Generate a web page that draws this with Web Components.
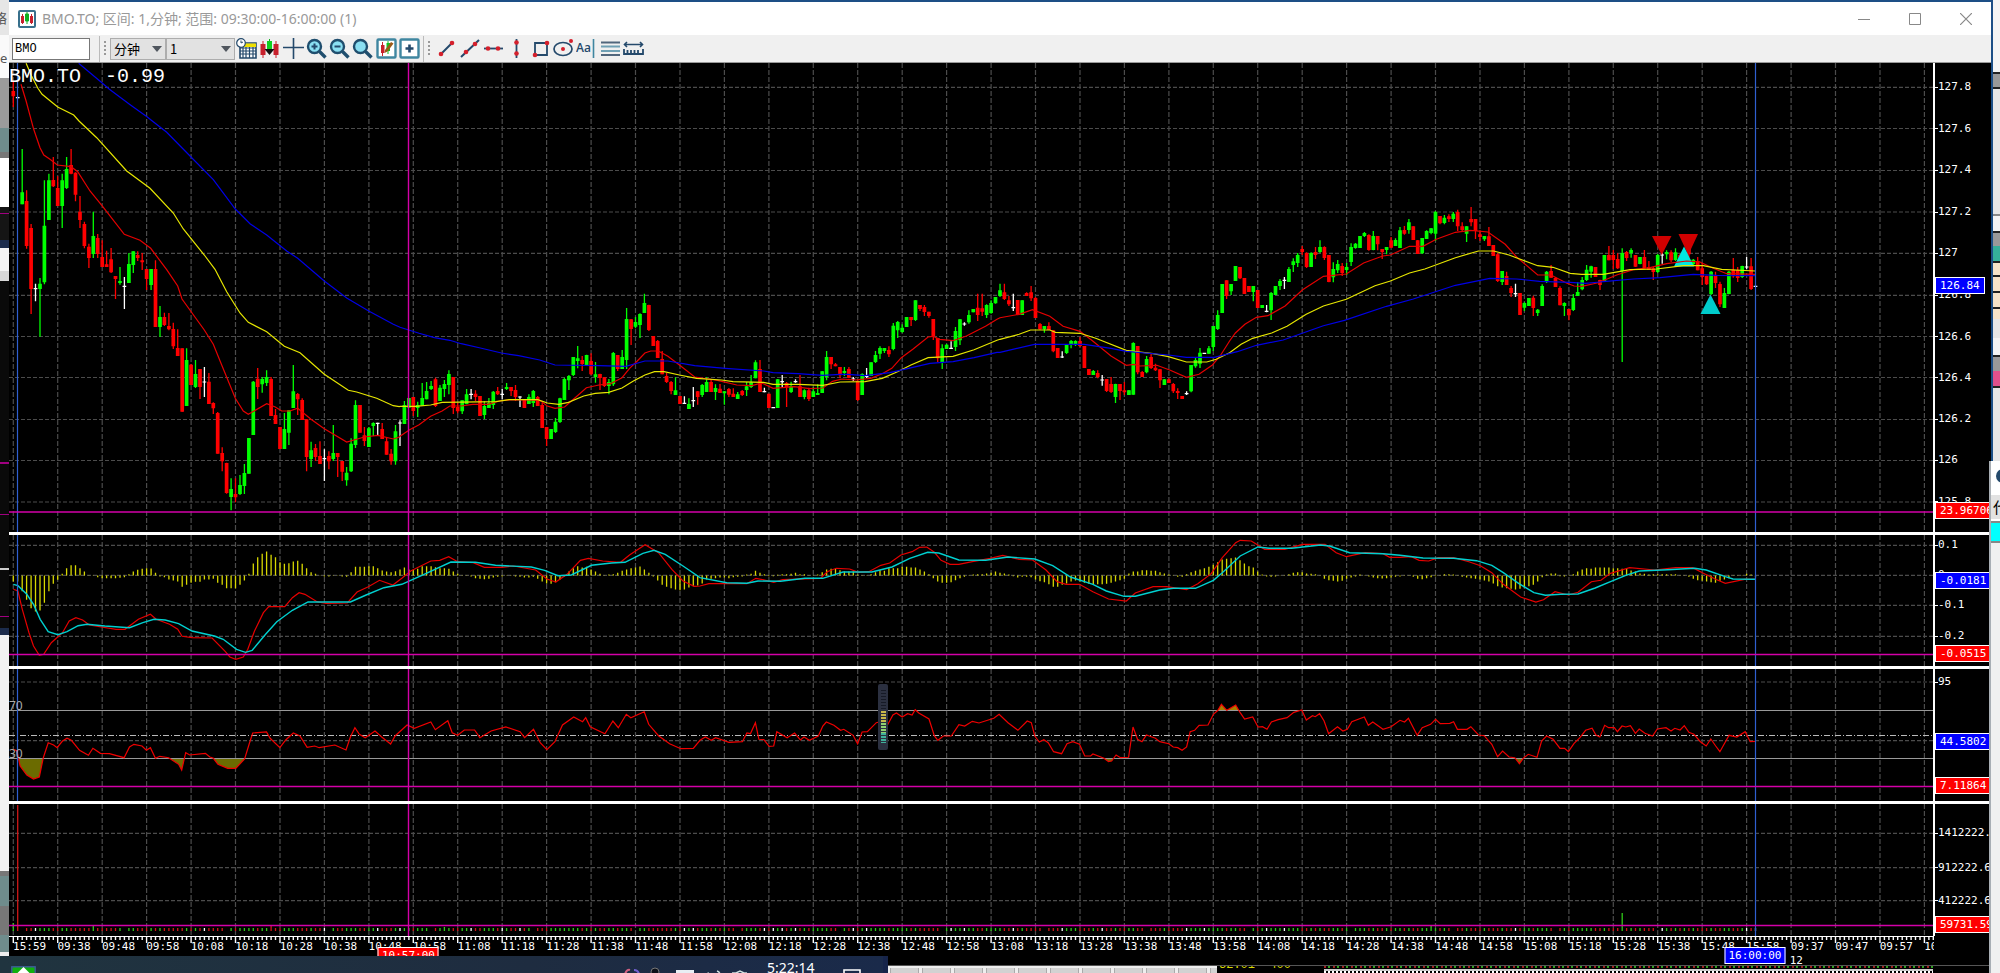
<!DOCTYPE html>
<html lang="zh-CN">
<head>
<meta charset="utf-8">
<title>BMO.TO</title>
<style>
html,body{margin:0;height:100%;overflow:hidden;background:#000}
</style>
</head>
<body>
<trading-desktop></trading-desktop>
<script>
const UI = '"Noto Sans","Noto Sans CJK SC",sans-serif';
const MONO = '"Liberation Mono","Noto Sans CJK SC",monospace';
const SCALE = '"DejaVu Sans Mono","Liberation Mono",monospace';

/* Candles: colour, then high, body top, body bottom, low, in thirds of a unit below `base`. */
const RUNS = [
 {i:0, base:0, d:'R240,270,286,318 W287,290,290,292'},
 {i:2, base:120, d:'G84,214,250,250 R208,240,375,383 R309,321,504,579 W488,503,503,541 G471,488,504,647 G178,314,484,490 G158,178,297,297 R108,177,196,198 R166,201,255,255 G158,178,255,321 G108,144,201,204 R84,132,158,160 R154,155,221,241 R225,272,297,321 R302,309,375,382 R368,377,411,441 G272,345,399,411 R339,351,399,411 R358,408,438,438 R389,430,438,438 R381,415,454,456 R465,465,474,534 G438,480,486,491 W468,496,496,564 G396,429,486,486 G391,391,432,456 R391,402,411,420 R396,418,424,447 R444,444,474,507 G444,444,492,507 R418,444,618,618 G555,588,618,648 R575,588,612,615 R576,615,625,628 R605,624,676,684 R625,681,705,705 R682,682,872,872 G682,717,855,855 R729,731,792,792 G717,759,798,801 R744,744,798,834 W738,783,783,828 R756,782,849,849 R844,846,862,879 R873,876,998,998 R979,996,1021,1051 R1025,1026,1116,1118 G1072,1104,1128,1168 R1072,1119,1129,1144 G1062,1092,1119,1122 G1029,1056,1095,1119 G951,951,1058,1058 G780,782,942,942 R741,773,798,834 G768,774,790,815 G748,768,786,795 R768,774,885,885 R864,882,909,909 R918,918,984,984 G876,924,984,984 G868,868,935,972 G732,811,861,861 R816,819,835,882 R832,837,897,897 R895,895,1008,1051 G962,988,1014,1038 R969,981,1008,1020 R961,1005,1029,1029 W985,1013,1013,1080 R991,1005,1021,1045 G912,996,1014,1020 R996,996,1008,1068 R1020,1020,1052,1080 G1038,1055,1078,1094 G952,968,1051,1053 G838,852,972,981 R852,852,935,935 R918,943,960,975 G918,922,978,978 G904,906,915,945 W905,907,907,943 R906,924,954,954 R951,961,1001,1001 R984,998,1021,1031 G912,931,1021,1031 W898,906,906,975 G840,852,909,909'},
 {i:89, base:280, d:'G351,351,380,380 R348,348,390,405 G362,372,381,408 G306,351,374,374 G303,330,355,355 G300,315,324,327 R290,295,375,378 G312,320,360,360 G297,309,324,348 G268,279,312,340 R288,288,381,399 R366,378,391,397 G358,358,391,399 G324,340,369,370 W324,340,340,355 R328,338,348,360 R345,345,405,405 G361,375,402,414 G351,366,381,381 G330,332,372,384 R318,330,340,342 W324,340,340,355 G306,318,324,327 R318,318,330,345 R312,327,348,360 W346,348,348,378 R354,354,381,381 G340,348,369,369 G327,330,366,378 R345,348,375,375 R366,372,441,441 R438,438,474,495 G444,444,474,474 G411,422,453,456 G350,352,423,426 G290,294,357,357 G282,285,298,327 G228,228,282,285 G195,232,240,262 R225,237,249,270 G221,222,252,252 R217,240,280,282 G243,280,288,305 R278,279,291,327 R289,289,315,318 G294,303,315,340 G213,216,310,315 R222,222,264,270 G207,228,264,264 G81,114,237,264 R114,115,144,192 G108,123,137,142 G97,99,132,171 G38,66,96,96 R71,72,147,150 R165,165,195,195 R177,180,231,231 R210,234,280,280 R276,285,303,306 R300,303,330,340 G289,328,342,342 R345,345,369,369 W346,367,367,369 G352,369,384,384 W318,359,359,378 R330,331,348,371 G309,312,342,348 G288,303,333,333 R295,303,333,333 G310,321,333,357 R309,323,336,336 G330,331,337,371 R321,324,341,348 R322,338,348,348 G333,340,354,354 R327,330,342,345 G303,316,327,345 G282,304,318,321 G238,244,292,292 R237,264,333,333 W320,332,332,334 R338,338,381,381 W380,380,380,381 G294,295,381,381 W282,302,302,318 R303,306,318,378 G302,315,333,336 W295,302,302,305 R282,316,348,348 G325,328,348,355 R320,328,354,360 G318,331,348,348 G310,336,342,342 G270,271,336,336 G210,228,288,298 R228,228,250,264 R246,250,256,256 R258,258,283,292 G258,270,276,285 R258,264,291,292 W288,294,294,300 R298,300,357,360 G277,279,342,342 W261,286,286,291 G244,244,285,285 G210,222,243,246 G196,201,218,234 G201,201,210,216 R196,207,220,228 G126,134,204,208 G120,123,148,171 G130,140,153,155 G108,108,138,138 R108,108,117,135 G58,58,117,120 R72,72,84,90 R72,78,93,105 R92,92,105,110 R114,114,165,177 R171,171,232,243 G190,202,243,264 G189,191,204,204 W181,202,202,204 G138,150,198,210 G114,115,178,192 W124,129,129,134 G88,102,124,128 G84,84,94,94 R38,80,102,120 R38,82,92,105 G70,72,102,111 G58,66,96,98 G48,48,67,68'},
 {i:222, base:180, d:'G308,328,345,348 R308,334,354,357 R345,358,370,375 W338,380,380,390 R357,357,402,402 G358,358,402,402 R334,336,345,345 R315,334,352,360 R348,351,411,411 R426,429,445,446 G435,435,445,455 R424,435,447,447 R447,448,511,514 R501,501,531,531 W511,528,528,531 G489,489,516,519 G477,480,490,502 G478,480,492,495 R468,480,495,498 R495,495,561,561 R564,564,582,582 G567,570,582,582 R568,576,588,592 W582,597,597,614 R594,594,630,633 R588,609,633,636 G608,609,648,666 R609,609,630,657 R603,628,634,642 G627,628,642,642 G484,486,641,641 R495,495,574,580 R570,573,588,588 G525,534,574,577 R516,528,561,564 R548,560,568,570 R564,565,598,621 G594,595,612,612 R592,595,606,606 R606,609,631,636 R622,630,636,654 R645,645,654,654 W631,638,638,642 G552,552,631,634 G530,537,556,560 G501,515,548,561 W516,517,517,518 G495,502,518,519 G435,435,498,510 G388,402,444,447 G309,309,396,396 R298,298,345,354 G309,309,331,342 G255,255,300,300 R258,258,292,294 R291,291,339,339 R315,315,333,333 G315,315,333,361 R327,327,381,381 G372,372,381,381 W372,391,391,394 G333,336,388,417 G315,315,342,342 G294,300,315,327 W288,298,298,324 G258,264,303,303 G232,241,252,273 G216,222,246,258 R195,204,213,222 R214,216,258,261 G214,216,258,258 R198,213,222,234 G178,198,213,216 R196,198,231,237 R222,222,303,304 G244,264,289,304 G237,249,268,276 R246,255,276,285 G246,258,267,282 G187,198,243,255 G186,188,201,203 G165,165,201,201 G153,156,165,168 R160,162,207,209 G150,165,207,208 R165,165,190,208 R204,204,213,234 G198,198,207,220 R168,178,200,201 G172,177,195,195 G138,148,201,201 R135,147,158,161 G114,124,147,158 R136,136,177,177 R177,178,219,219 G171,171,217,219 G148,150,174,174 G141,142,156,160 G90,93,158,180 R105,105,127,130 G102,110,126,130 R100,106,114,123 G93,98,114,123 R86,93,136,150 R124,136,147,152 G136,136,158,183 R78,114,124,136 R114,114,150,174 R148,160,168,180 G165,165,175,180 R138,166,195,195 R192,192,225,225 R217,220,300,303 G270,270,303,312 R272,285,312,312 R315,321,336,348 W308,338,338,348 R336,336,402,402 G364,366,380,390 G351,351,375,375 R344,350,381,405 G384,386,396,405 G310,315,375,375 G270,272,303,306 R252,270,290,290 R288,291,318,318 R316,321,373,373 G364,366,375,405 R384,384,403,418 G339,351,387,390 G303,333,345,345 G288,297,325,328 G252,266,297,300 G254,256,272,290 R258,258,288,288 R296,297,312,327 G222,222,303,303 R195,222,238,238 R207,222,237,264 R217,234,262,264 G202,216,270,543 R210,213,231,240 G202,207,216,230 R222,222,257,258 G228,228,249,250 R207,228,261,262 R240,258,267,267 R257,262,273,297 G219,222,273,276 W213,222,222,248 G208,213,220,235 R208,214,238,243 G202,214,237,240 R218,222,245,250 G218,222,250,250 R180,190,220,230 G234,236,250,255 R228,240,268,268 R246,262,288,312 R284,285,310,312 G270,272,339,342 R272,284,306,321 R302,309,370,378 G321,336,381,381 G270,272,339,340 R231,266,286,290 R258,267,291,303 G254,255,288,291 W228,258,258,264 R231,256,324,327 W315,316,316,317'}
];
const STEP = 400 / 90, FIRST = 13.3;
const xAt = i => FIRST + STEP * i;
const candles = [];
for (const r of RUNS) r.d.split(' ').forEach((t, n) => {
  const [h, o, c, l] = t.slice(1).split(',').map(v => r.base + v / 3);
  candles.push({ i: r.i + n, k: t[0], h, o, c, l });
});

/* Polyline chunks: x origin, x divisor, y base, then x,y pairs. */
const line = chunks => chunks.map(([x0, sx, y0, s]) => s.trim().split(/\s+/).map(p => {
  const [x, y] = p.split(',').map(Number);
  return (x0 + x / sx).toFixed(1) + ',' + (y0 + y / 3).toFixed(1);
}).join(' ')).join(' ');
const A = 2.376, B = 2.613, C = 2.24;

const maFast = line([[0,A,0,'50,250 62,300 80,385 95,440 104,462'],
 [0,3,120,'150,115 172,132 213,137 233,152 270,210 306,254 373,340 420,358 452,382 500,446 533,495 546,534 613,627 640,670 665,732 706,832 730,870 745,880 800,848 826,858 845,870 870,870 893,862 933,895 973,923 1040,963 1093,948 1133,943 1180,954 1198,948'],
 [400,B,280,'0,466 25,446 50,431 80,406 110,390 130,375 160,375 190,370 230,370 260,360 290,356 330,357 365,358 385,375 405,382 430,378 460,348 487,320 520,312 550,308 580,290 600,262 620,240 640,216 655,210 675,210 700,226 730,252 770,288 830,298 880,312 920,314 945,306 975,322 1030,317 1070,323 1105,321 1130,301 1155,294 1190,297 1230,292 1260,278 1285,262 1310,230 1340,205 1380,168 1393,166 1410,175 1445,179 1480,165 1530,136 1560,115'],
 [1000,B,180,'0,410 50,400 85,386 130,406 165,436 209,451 240,478 290,525 330,553 350,550 365,555 410,553 445,568 487,589 520,580 555,552 575,525 600,480 615,456 640,430 670,409 700,404 745,375 790,327 845,286 905,279 950,246 1000,225 1020,222 1070,196 1105,196 1140,175 1190,154 1230,148 1275,153 1320,190 1350,228 1405,282 1440,282 1480,306 1500,315 1520,316 1560,306'],
 [1500,3,180,'300,303 350,282 400,266 450,260 500,248 560,240 600,243 640,262 680,278 766,280']]);
const maMid = line([[0,A,0,'62,187 75,225 90,262 100,280 137,318 175,342'],
 [0,3,120,'237,0 290,50 380,150 450,202 520,276 550,324 613,402 645,445 680,512 720,576 745,604 800,632 853,676 900,695 973,760 1045,808 1070,813 1130,832 1180,854 1198,857'],
 [400,B,280,'0,376 40,376 80,372 110,364 250,362 285,356 360,356 385,366 415,370 440,364 480,345 510,337 545,334 580,321 610,300 640,282 665,272 690,272 730,282 775,292 840,297 870,302 950,304 975,310 1040,310 1105,313 1150,303 1215,302 1260,292 1300,272 1335,252 1380,230 1445,226 1500,206 1560,178'],
 [1000,B,180,'0,475 50,460 80,447 130,447 145,454 209,457 250,472 330,508 400,518 440,527 487,543 540,543 565,535 600,515 630,490 660,472 710,456 750,436 800,400 845,375 905,355 980,314 1020,300 1070,276 1110,264 1190,230 1250,210 1290,210 1330,222 1405,254 1445,259 1490,277 1520,280 1568,280'],
 [1500,3,180,'310,280 390,266 470,264 550,254 610,254 665,265 766,270']]);
const maSlow = line([[0,A,0,'187,187 240,243 260,265 310,312 350,348'],
 [0,3,120,'457,0 500,34 573,108 640,176 706,264 750,308 800,342 860,390 893,412 973,480 1040,531 1106,570 1180,610'],
 [400,B,280,'0,139 50,157 90,170 130,178 160,188 210,201 265,216 310,224 365,237 405,252 520,254 590,256 640,240 700,240 770,254 850,262 950,270 975,275 1040,278 1105,283 1150,280 1170,280 1215,284 1280,275 1340,259 1385,247 1445,242 1500,230 1560,214'],
 [1000,B,180,'0,514 90,490 220,490 290,502 330,511 440,522 487,529 560,529 620,512 670,493 740,477 845,434 900,418 1010,376 1080,354 1190,313 1280,292 1350,294 1410,301 1490,304 1530,307 1568,303'],
 [1500,3,180,'310,302 400,294 480,290 580,280 650,283 766,284']]);

const macd = line([[0,C,520,'30,205 40,210 50,265 65,335 75,375 88,403 98,400 115,365 140,335 155,300 170,290 185,297 200,312 260,325 280,325 310,295 337,280 350,295 380,310 398,325 408,346 430,350 475,351 505,392 515,408 528,415 545,408 555,385 570,330 590,275 602,257 638,257 655,230 670,215 683,220 710,242 730,247 778,246 800,213 825,197 850,178 880,192 900,172 920,150 965,120 985,118 1005,107 1025,122 1060,125 1085,139 1125,139 1150,135 1200,147 1225,174 1245,183 1270,160 1300,118 1318,112 1350,120 1390,124 1410,102 1445,71 1475,95 1505,145 1530,180 1555,196'],
 [700,C,520,'0,195 20,188 105,188 125,172 145,177 165,184 185,176 270,172 285,152 305,142 335,144 355,154 378,152 405,133 425,126 450,102 475,92 492,79 508,78 525,94 540,118 560,130 580,130 610,122 650,112 678,103 715,115 745,117 775,147 800,182 820,190 850,190 880,212 915,234 955,240 975,216 1015,197 1045,197 1090,206 1115,188 1145,158 1170,110 1200,65 1210,58 1235,60 1265,85 1310,85 1350,70 1400,70 1425,95 1448,107 1490,95 1530,98 1545,109'],
 [1400,B,520,'0,109 30,107 50,118 75,120 100,110 140,110 180,122 210,134 240,155 270,190 315,228 355,243 375,236 405,212 440,222 465,214 500,182 525,178 550,157 600,140 665,147 720,140 765,140 790,155 825,175 850,187 900,175 929,175']]);
const signal = line([[0,C,520,'30,190 40,194 60,220 75,250 90,295 108,332 130,341 150,332 175,314 195,310 235,315 290,320 320,305 345,295 370,297 400,308 430,330 480,345 500,355 530,385 550,394 565,388 595,340 620,302 655,268 690,243 785,243 820,222 860,200 900,190 950,160 1010,123 1065,124 1110,133 1190,138 1220,148 1250,164 1280,162 1325,133 1370,126 1400,124 1440,97 1465,88 1490,100 1530,135'],
 [700,C,520,'0,170 60,185 105,187 130,180 180,181 235,172 275,172 320,153 385,153 430,138 470,112 510,94 535,96 580,117 640,118 690,108 750,114 790,134 830,168 880,190 910,210 950,226 975,226 1030,207 1060,202 1110,202 1150,178 1170,155 1210,105 1250,78 1275,82 1325,82 1390,72 1410,75 1455,95 1530,98'],
 [1400,B,520,'0,103 60,111 140,112 200,119 240,133 270,155 310,187 350,215 380,223 420,220 465,219 510,201 550,182 590,163 625,150 700,146 770,142 800,147 850,167 870,174 929,175']]);
const HIST = '-18 -18 -47 -73 -98 -108 -105 -82 -47 -25 -13 5 22 31 31 22 12 1 1 -5 -8 -8 -8 -8 -7 -5 4 12 17 20 22 21 8 -3 -5 -12 -15 -18 -34 -28 -22 -19 -19 -12 -12 -10 -22 -28 -38 -38 -38 -28 -15 5 36 55 65 72 62 55 40 35 37 42 44 35 22 10 5 1 -3 -3 1 1 -3 -4 10 26 26 26 28 28 22 15 12 10 13 18 24 18 18 20 28 28 28 25 22 22 20 12 5 1 1 -3 -8 -10 -11 -10 -6 -4 -3 1 1 -3 -4 -6 -6 -4 -10 -18 -24 -25 -20 -12 -3 12 22 28 24 26 18 12 5 1 3 4 8 14 18 22 24 27 18 8 -3 -15 -28 -34 -38 -42 -44 -42 -36 -32 -30 -24 -12 -10 -8 -6 -6 -8 -5 -4 -3 3 5 14 8 4 -2 -2 2 4 4 5 8 4 4 1 -1 3 10 18 20 20 16 12 12 12 3 1 1 4 10 16 14 22 22 22 26 26 24 24 18 12 4 -8 -18 -22 -22 -20 -14 -8 -4 -1 3 4 4 6 8 12 8 6 3 -2 -6 -4 -4 -5 -12 -17 -20 -26 -34 -34 -28 -24 -18 -15 -18 -22 -25 -26 -26 -26 -25 -22 -18 -14 -10 6 12 12 16 16 14 14 10 6 3 1 -4 -4 4 10 14 18 22 26 32 40 48 50 52 54 46 36 28 24 12 3 -3 -4 -3 1 1 4 8 10 10 6 5 4 1 -10 -14 -16 -18 -16 -10 -6 -3 3 1 -3 -6 -8 -9 -8 -6 -4 -3 1 -1 -4 -10 -11 -8 -5 -2 1 4 4 3 -1 -4 -6 -8 -10 -12 -15 -18 -24 -32 -36 -38 -40 -42 -40 -36 -32 -28 -18 -5 3 6 6 -2 -3 -1 4 12 18 22 20 24 24 24 24 22 22 20 20 15 12 6 5 3 4 4 4 4 4 4 1 1 -4 -10 -14 -16 -18 -20 -22 -16 -12 -8 1 1 1 5 3 -5'.split(' ').map(Number);

const rsi = line([[0,C,520,'30,685 38,690 45,735 60,762 75,774 88,768 97,710 108,665 120,672 128,680 140,660 150,652 160,658 178,688 198,703 208,682 225,697 245,698 278,710 290,678 300,670 318,675 328,688 337,680 348,712 358,706 378,710 400,730 407,747 416,695 425,702 460,697 470,708 478,712 488,730 510,742 528,742 548,714 558,670 566,636 597,633 605,652 627,680 640,657 657,636 672,645 688,679 705,675 715,680 750,672 775,687 785,648 795,620 805,640 818,650 840,630 855,648 875,669 885,645 912,612 928,622 965,603 975,626 1003,599 1013,635 1025,643 1040,627 1063,627 1075,650 1100,630 1133,618 1165,632 1175,650 1195,625 1210,665 1225,686 1243,662 1260,612 1285,588 1305,602 1312,590 1322,617 1355,638 1373,600 1385,620 1403,580 1413,590 1443,572 1453,610 1475,644 1500,668 1525,683 1553,682'],
 [700,C,520,'0,658 12,648 25,658 35,650 65,664 95,662 105,636 113,638 124,605 132,655 143,656 155,676 165,675 172,632 195,650 212,636 225,657 233,648 245,658 265,645 275,615 283,603 300,613 315,628 322,625 343,643 353,668 363,633 375,632 395,605 405,602 420,612 432,582 440,576 453,588 465,578 475,582 482,566 490,576 513,594 525,645 533,658 545,645 563,645 580,611 593,615 610,601 625,606 658,592 670,580 690,605 712,628 733,600 742,605 750,645 760,663 770,656 780,665 792,692 810,698 822,668 835,662 850,670 862,705 875,705 880,699 905,712 915,722 922,720 932,702 942,710 960,709 970,618 980,655 990,662 1000,642 1020,652 1030,662 1050,668 1060,678 1070,680 1080,688 1090,678 1098,632 1108,628 1118,613 1138,612 1150,580 1160,568 1168,550 1180,568 1200,552 1210,575 1220,594 1238,588 1250,618 1260,617 1270,625 1280,603 1295,596 1315,590 1330,574 1348,567 1358,597 1372,584 1378,587 1388,578 1398,600 1408,638 1428,617 1440,630 1450,625 1460,602 1488,588 1497,613 1507,603 1530,625 1548,617'],
 [1400,B,520,'0,598 12,603 22,592 45,643 58,620 80,610 93,595 105,608 130,607 140,602 150,625 175,625 185,617 205,642 220,644 240,670 255,707 268,690 285,708 300,710 312,728 322,712 335,700 358,709 370,660 383,645 400,655 418,682 430,682 440,692 455,667 470,650 485,628 502,622 512,642 522,648 535,613 545,620 560,620 568,632 580,615 590,618 602,614 615,637 625,624 640,637 660,645 672,624 695,620 708,630 718,622 732,627 743,614 755,634 768,640 785,662 800,675 812,654 825,675 836,692 860,643 880,648 902,632 915,662 929,661']]);

const COL = { R: '#ff0000', G: '#00ff00', W: '#ffffff' };
const pl = (p, c, w = 1.2) => `<polyline points="${p}" fill="none" stroke="${c}" stroke-width="${w}"/>`;
const plots = {
  price() {
    let s = '';
    for (const k of 'RGW') {
      let wick = '', body = '';
      for (const c of candles) if (c.k === k) {
        const x = xAt(c.i).toFixed(1);
        wick += `M${x} ${c.h.toFixed(1)}V${c.l.toFixed(1)}`;
        const o = k === 'W' ? c.o - .6 : c.o, e = k === 'W' ? c.o + .6 : c.c;
        body += `M${x} ${o.toFixed(1)}V${e.toFixed(1)}`;
      }
      s += `<path d="${wick}" stroke="${COL[k]}" stroke-width="1.3"/><path d="${body}" stroke="${COL[k]}" stroke-width="3.7"/>`;
    }
    s += `<path d="M1652 235h19.500l-9.750 19zM1678.500 233h19.500l-9.750 21z" fill="#d00000"/>`;
    s += `<path d="M1674 265.500h20l-10-20z" fill="#00e8e0"/><path d="M1700.500 313h20l-10-19.500z" fill="#00cccc"/>`;
    return s + pl(maFast, '#e60000') + pl(maMid, '#e6e600') + pl(maSlow, '#0000e6');
  },
  macd() {
    let d = '';
    HIST.forEach((v, i) => d += `M${xAt(i).toFixed(1)} 574.500v${(-v / 3 || -.5).toFixed(1)}`);
    return `<path d="${d}" stroke="#d8d800" stroke-width="1.3"/>` + pl(macd, '#e60000') + pl(signal, '#00d0d0', 1.4);
  },
  rsi() {
    return `<clipPath id="lo"><rect x="9" y="758" width="1925" height="40"/></clipPath><clipPath id="hi"><rect x="9" y="670" width="1925" height="40"/></clipPath>
    <polygon points="13,600 ${rsi} 1755,600" fill="#6b6b00" clip-path="url(#lo)"/>
    <polygon points="13,900 ${rsi} 1755,900" fill="#a88000" clip-path="url(#hi)"/>
    <path d="M9 709.500H1934M9 757.500H1934" stroke="#999"/>
    <path d="M9 734.500H1934" stroke="#bbb" stroke-dasharray="6 2 1 2"/>` + pl(rsi, '#f00000') +
    `<rect x="878" y="683" width="10" height="66" rx="2" fill="#2b3040"/><path d="M883.500 689V709" stroke="#161a26" stroke-width="5" stroke-dasharray="1 2"/><path d="M883.500 710V721" stroke="#c8b84a" stroke-width="5" stroke-dasharray="2 1"/><path d="M883.500 722V732" stroke="#8fd070" stroke-width="5" stroke-dasharray="2 1"/><path d="M883.500 732V742" stroke="#3fb09a" stroke-width="5" stroke-dasharray="2 1"/>`;
  },
  volume() {
    let s = '';
    const tall = { 0: 922, 1: 804, 362: 912, 18: 925, 58: 925, 97: 926, 319: 925 };
    const dim = { R: '#d01818', G: '#30c818', W: '#ffffff' };
    for (const k of 'RGW') {
      let d = '';
      for (const c of candles) {
        const kk = c.i === 0 ? 'G' : c.i === 1 ? 'R' : c.k;
        if (kk !== k || (c.i * 37 % 23) === 5) continue;
        d += `M${xAt(c.i).toFixed(1)} 930V${tall[c.i] || 927}`;
      }
      s += `<path d="${d}" stroke="${dim[k]}" stroke-width="1.3"/>`;
    }
    return s;
  }
};

const make = (name, html, init) => customElements.define(name, class extends HTMLElement {
  constructor() { super(); this.attachShadow({ mode: 'open' }); }
  connectedCallback() {
    this.shadowRoot.innerHTML = typeof html === 'function' ? html(this) : html;
    if (init) init(this);
  }
});

make('price-tag', `<style>
:host{position:absolute;z-index:2;box-sizing:border-box;height:17px;border:1px solid #fff;background:#f00;color:#fff;font:11px/15px ${SCALE};padding:0 4px;white-space:nowrap}
:host([tone=blue]){background:#00f}
</style><slot></slot>`);

make('chart-pane', el => {
  const y0 = +el.getAttribute('from'), h = +el.getAttribute('span'), cross = el.getAttribute('cross');
  const levels = el.getAttribute('levels').split(' ').map(t => t.split(':'));
  let g = '';
  for (const [y] of levels) g += `M9 ${y}H1934`;
  let v = '';
  for (let k = 0; k <= 43; k++) v += `M${xAt(k * 10).toFixed(1)} ${y0}v${h}`;
  return `<style>
:host{display:grid;grid-template-columns:1fr 57px;min-height:0;border-bottom:3px solid #fff;background:#000;color:#fff;font:11px/14px ${SCALE}}
:host([last]){border-bottom:0}
.plot{position:relative;min-height:0;min-width:0}
svg{display:block;width:100%;height:100%;position:absolute;inset:0}
.axis{position:relative;border-left:2px solid #fff;margin-left:-1px;overflow:hidden}
.lv{position:absolute;left:0;transform:translateY(-50%);display:flex;align-items:center;white-space:nowrap}
.lv::before{content:"";width:3px;height:1px;background:#fff}
::slotted(price-tag){left:0;top:var(--at)}
</style>
<div class="plot"><svg viewBox="9 ${y0} 1925 ${h}" preserveAspectRatio="none" fill="none" aria-hidden="true">
<path d="${g}" stroke="#4c4c4c" stroke-width="1.2" stroke-dasharray="4 2"/><path d="${v}" stroke="#4c4c4c" stroke-width="1.2" stroke-dasharray="5 2"/>
${plots[el.getAttribute('kind')]()}
<path d="M1755.500 ${y0}v${h}${el.hasAttribute('last') ? '' : `M17.500 ${y0}v${h}`}" stroke="#2f5fd0" stroke-width="1.2"/>
<path d="M9 ${cross}H1934M408.500 ${y0}v${h}" stroke="#d400a8" stroke-width="1.4"/>
</svg><slot></slot></div>
<div class="axis">${levels.filter(l => l[1]).map(([y, t]) => `<span class="lv" style="top:${((y - y0) / h * 100).toFixed(2)}%">${t}</span>`).join('')}<slot name="tag"></slot></div>`;
});

make('time-axis', () => {
  const t = ['15:59'];
  for (let m = 9 * 60 + 38; m <= 15 * 60 + 58; m += 10) t.push(m);
  for (let m = 9 * 60 + 37; m <= 10 * 60 + 7; m += 10) t.push(m);
  const f = m => typeof m === 'string' ? m : String(m / 60 | 0).padStart(2, '0') + ':' + String(m % 60).padStart(2, '0');
  let minor = '', major = '';
  for (let i = 0; i < 433; i++) (i % 10 ? minor += `M${xAt(i).toFixed(1)} 0v3` : major += `M${xAt(i).toFixed(1)} 0v6`);
  return `<style>
:host{display:grid;grid-template-columns:1fr 57px;height:29px;background:#000;color:#fff;font:11px/14px ${SCALE}}
.scale{position:relative;overflow:hidden;border-top:1px solid #fff}
svg{display:block;width:100%;height:6px}
span{position:absolute;top:3px;white-space:nowrap}
.date{top:17px}
::slotted(price-tag){left:var(--at);top:10px;transform:translateX(-50%);padding:0 3px}
</style><div class="scale"><svg viewBox="9 0 1925 6" preserveAspectRatio="none" fill="none"><path d="${minor}${major}" stroke="#fff" stroke-width="1.4"/></svg>
${t.map((m, k) => `<span style="left:${((k * 44.444 + 4) / 1925 * 100).toFixed(2)}%">${f(m)}</span>`).join('')}
<span class="date" style="left:0.2%">10 Dec 2021</span><span class="date" style="left:92.500%">12</span><slot></slot></div><i></i>`;
});

make('title-bar', `<style>
:host{display:flex;align-items:center;height:33px;background:#fff;color:#999;font:14px/20px ${UI}}
.ico{width:18px;height:18px;margin:0 6px 0 9px}
h1{font:inherit;margin:0;flex:1;white-space:nowrap}
button{width:51px;height:32px;border:0;background:none;padding:0;display:grid;place-items:center}
</style>
<svg class="ico" viewBox="0 0 18 18"><rect x="1" y="1" width="16" height="16" rx="1" fill="#fff" stroke="#38708c" stroke-width="2"/><path d="M4.500 4v10M13.500 4v10" stroke="#c8202c" stroke-width="1"/><path d="M3 6h3v7H3zM12 6h3v7h-3z" fill="#c8202c"/><path d="M9 2v12M7.500 4h3v7h-3z" fill="#10b020" stroke="#10b020"/></svg>
<h1>BMO.TO; 区间: 1,分钟; 范围: 09:30:00-16:00:00 (1)</h1>
<button aria-label="最小化"><svg width="12" height="12"><path d="M0 6.500h12" stroke="#888"/></svg></button>
<button aria-label="最大化"><svg width="12" height="12"><path d="M.5.5h11v11H.5z" fill="none" stroke="#888"/></svg></button>
<button aria-label="关闭"><svg width="12" height="12"><path d="M0 0l12 12M12 0L0 12" stroke="#888" stroke-width="1.2"/></svg></button>`);

make('tool-button', el => `<style>
:host{display:block;width:23px;height:24px}
button{width:100%;height:100%;border:0;background:none;padding:0;display:grid;place-items:center}
::slotted(svg){width:21px;height:21px;display:block}
</style><button aria-label="${el.getAttribute('name')}"><slot></slot></button>`);

make('combo-box', el => `<style>
:host{display:block;position:relative}
select{appearance:none;box-sizing:border-box;width:100%;height:22px;border:1px solid #adadad;background:#e2e2e2;color:#000;font:13px/18px "Noto Sans CJK SC",sans-serif;padding:0 0 0 3px;border-radius:0}
svg{position:absolute;right:4px;top:8px}
</style><select aria-label="${el.getAttribute('name')}"><option>${el.getAttribute('value')}</option></select><svg width="10" height="6" viewBox="0 0 10 6"><path d="M0 0h10L5 6z" fill="#50565e"/></svg>`);

const lens = x => `<circle cx="8.500" cy="8.500" r="6.500" fill="#8adff2" stroke="#1f4e6e" stroke-width="2.400"/><path d="M13.500 13.500l6 6" stroke="#1f4e6e" stroke-width="3.400"/>${x}`;
const dot = (x, y, r = 2) => `<circle cx="${x}" cy="${y}" r="${r}" fill="#d4202c"/>`;
const S = '#24496b';
const ICONS = [
 ['日历', `<path d="M4 5h16v15H4z" fill="#fff" stroke="${S}" stroke-width="1.600"/><path d="M4 5.500h16v3.500H4z" fill="#f0e000"/><path d="M4 10h16M4 13h16M4 16h16M7 9v11M10 9v11M13.500 9v11M17 9v11" stroke="${S}" stroke-width="1.200"/><circle cx="5" cy="5" r="4.300" fill="#fff" stroke="${S}" stroke-width="1.200"/><path d="M5 2.500V5l2-1" fill="none" stroke="${S}"/>`],
 ['K线', `<path d="M4 3v17M17 3v17" stroke="#c8202c"/><path d="M1.500 6h5v11h-5zM14.500 6h5v11h-5z" fill="#c8202c"/><path d="M10.500 1v12" stroke="#10b020"/><path d="M8 3h5v10H8z" fill="#10d020"/><path d="M5.500 11h10l-5 6z" fill="#111"/>`],
 ['十字光标', `<path d="M10.500 0v21M0 9.500h21" stroke="${S}" stroke-width="1.600"/>`],
 ['放大', lens(`<path d="M5.500 8.500h6M8.500 5.500v6" stroke="${S}" stroke-width="2"/>`)],
 ['缩小', lens(`<path d="M5.500 8.500h6" stroke="${S}" stroke-width="2"/>`)],
 ['缩放', lens('')],
 ['编辑', `<rect x="1.500" y="1.500" width="18" height="18" rx="1" fill="#fff" stroke="#3f86a0" stroke-width="2.400"/><path d="M6.500 4v14" stroke="#c8202c"/><path d="M5 7h3.500v8H5z" fill="#c8202c"/><path d="M12 3v13" stroke="#10c020"/><path d="M10.500 5h3.500v8h-3.500z" fill="#10c020"/><path d="M9 12l6-8 2.500 1.500-6 8-3 1.500z" fill="#9a5a18"/>`],
 ['添加', `<rect x="1.500" y="1.500" width="18" height="18" rx="1" fill="#fff" stroke="#3f86a0" stroke-width="2.400"/><path d="M6.500 10.500h8M10.500 6.500v8" stroke="${S}" stroke-width="2.600"/>`]
];
const DRAW = [
 ['线段', `<path d="M5 16L16 5" stroke="${S}" stroke-width="2"/>${dot(5,16,2.3)}${dot(16,5,2.3)}`],
 ['直线', `<path d="M2 19L20 2" stroke="${S}" stroke-width="2"/>${dot(7,14,2.3)}${dot(16,6,2.3)}`],
 ['水平线', `<path d="M1 10.500h19" stroke="${S}" stroke-width="1.800"/>${dot(5,10.5,2.3)}${dot(15,10.5,2.3)}`],
 ['垂直线', `<path d="M10.500 1v19" stroke="${S}" stroke-width="1.800"/>${dot(10.5,4.5,2.3)}${dot(10.5,15.5,2.3)}`],
 ['矩形', `<path d="M5 5h12v12H5z" fill="none" stroke="${S}" stroke-width="1.800"/>${dot(5,17,2.3)}${dot(17,5,2.3)}`],
 ['椭圆', `<ellipse cx="10" cy="11" rx="9" ry="6.500" fill="none" stroke="${S}" stroke-width="1.700"/>${dot(10,11)}${dot(18,3)}`],
 ['文字', `<text x="0" y="14" font-family="Open Sans" font-size="12" font-weight="600" fill="${S}">Aa</text><path d="M17.500 1v19" stroke="#3f86a0" stroke-width="1.600"/>`],
 ['斐波那契', `<path d="M1 4.500h19M1 17h19" stroke="#50667c" stroke-width="2"/><path d="M1 8.500h19M1 13h19" stroke="#6fa0b4" stroke-width="2"/>`],
 ['标尺', `<path d="M1 6.500h19M4 4L1.500 6.500 4 9M17 4l2.500 2.500L17 9" fill="none" stroke="${S}" stroke-width="1.600"/><path d="M1 11v5h19v-5M4.500 12v4M8 12v4M11.500 12v4M15 12v4" fill="none" stroke="${S}" stroke-width="1.800"/>`]
];
const tools = list => list.map(([n, s]) => `<tool-button name="${n}"><svg viewBox="0 0 21 21">${s}</svg></tool-button>`).join('');
make('chart-toolbar', `<style>
:host{display:flex;align-items:center;height:28px;box-sizing:border-box;padding:0 3px;background:#f0f0f0;border-bottom:1px solid #999}
input{box-sizing:border-box;width:78px;height:22px;border:1px solid #777;background:#fff;font:12px/16px ${MONO};padding:0 2px;color:#000}
.sep{width:1px;height:26px;background:#bbb;margin-left:9px}
.sep.tight{margin-left:2px}
.grip{width:2px;height:16px;margin:0 4px;background:repeating-linear-gradient(#999 0 2px,transparent 2px 4px)}
combo-box:nth-of-type(1){width:56px}
combo-box{width:69px}
.set{display:flex;justify-content:space-between;width:186px}
.draw{width:210px;margin-left:1px}
</style>
<input type="text" value="BMO" aria-label="代码"><i class="sep"></i><i class="grip"></i>
<combo-box name="周期" value="分钟"></combo-box><combo-box name="数量" value="1"></combo-box>
<div class="set">${tools(ICONS)}</div><i class="sep tight"></i><i class="grip"></i><div class="set draw">${tools(DRAW)}</div>`);

make('chart-window', `<style>
:host{display:flex;flex-direction:column;min-width:0;min-height:0;overflow:hidden;background:#000}
.panes{flex:1;min-height:0;display:grid;grid-template-rows:472fr 134fr 135fr 132fr}
.quote{position:absolute;left:0;top:2px;color:#fff;font:20px/24px ${MONO};white-space:pre;margin:0}
.band{position:absolute;left:0;color:#aaa;font:12px/14px ${UI}}
</style>
<title-bar></title-bar><chart-toolbar></chart-toolbar>
<div class="panes">
<chart-pane kind="price" from="62" span="469" cross="511" levels="86.300:127.8 127.500:127.6 169.500:127.4 211:127.2 252.300:127 294.300:126.8 335.500:126.6 376.500:126.4 418.500:126.2 459.500:126 501:125.8"><p class="quote">BMO.TO  -0.99</p><price-tag slot="tag" tone="blue" style="--at:45.700%">126.84</price-tag><price-tag slot="tag" style="--at:93.700%">23.96706</price-tag></chart-pane>
<chart-pane kind="macd" from="534" span="131" cross="653.500" levels="544.300:0.1 574.300:0 604.300:-0.1 635.300:-0.2"><price-tag slot="tag" tone="blue" style="--at:28%">-0.0181</price-tag><price-tag slot="tag" style="--at:84%">-0.0515</price-tag></chart-pane>
<chart-pane kind="rsi" from="668" span="132" cross="785.500" levels="681:95 739.700"><span class="band" style="top:22.500%">70</span><span class="band" style="top:59%">30</span><price-tag slot="tag" tone="blue" style="--at:48.500%">44.5802</price-tag><price-tag slot="tag" style="--at:82%">7.11864</price-tag></chart-pane>
<chart-pane kind="volume" last from="803" span="132" cross="924.500" levels="832.300:1412222.6 866.700:912222.6 899.700:412222.6"><price-tag slot="tag" style="--at:85%">59731.59</price-tag></chart-pane>
</div>
<time-axis><price-tag style="--at:20.750%">10:57:00</price-tag><price-tag tone="blue" style="--at:90.700%">16:00:00</price-tag></time-axis>`);

make('task-bar', `<style>
:host{display:flex;align-items:flex-start;box-sizing:border-box;height:17px;overflow:hidden;padding:10px 0 0 11px;background:linear-gradient(90deg,#20343f,#1e2c40 60%,#1a2a4a);border-right:5px solid #16244a;color:#fff;font:14px/20px ${UI}}
.up{width:25px;height:20px}
.tray{margin-left:auto;width:143px;height:10px}
time{margin-top:-8px;width:76px}
.note{width:18px;height:14px;margin:3px 22px 0 0}
</style>
<svg class="up" viewBox="0 0 25 20"><rect x=".5" y=".5" width="24" height="19" rx="2" fill="#10b010" stroke="#3a5a90" stroke-width="2"/><path d="M12.500 1l9 9h-18z" fill="#fff"/></svg>
<svg class="tray" viewBox="0 0 143 10"><path d="M1 8q2-5 5-4" stroke="#d06080" stroke-width="2" fill="none"/><path d="M10 4q4 0 5 4" stroke="#7060d0" stroke-width="2" fill="none"/><circle cx="31" cy="6" r="4" fill="#0c1018" stroke="#777"/><path d="M52 4h18v8H52z" fill="#e8eef4"/><path d="M82 8l3-1M93 5q3 1 3 4M108 7h4l4-2 4 2h3" stroke="#cdd" fill="none" stroke-width="1.500"/></svg>
<time>5:22:14</time>
<svg class="note" viewBox="0 0 18 14"><path d="M1 1h16v13H1z" fill="none" stroke="#fff" stroke-width="1.600"/></svg>`);

make('lower-window', `<style>
:host{display:grid;grid-template-columns:329px 107px 1fr 58px;height:8px;overflow:hidden;background:#000;border-top:1px solid #555;box-sizing:border-box;color:#d8d800;font:11px/14px ${MONO}}
.keys{border-top:2px solid #eee;background:repeating-linear-gradient(90deg,#eee 0 2px,#aaa 2px 3px,#d2d2d2 3px 30px,#aaa 30px 31px,#eee 31px 32px)}
.q{white-space:pre;margin-top:-8px;padding-left:2px;font-size:12px}
.t{background:repeating-linear-gradient(90deg,#fff 0 2px,transparent 2px 4px) 0 5px/100% 3px no-repeat,linear-gradient(#ccc,#ccc) 0 3px/100% 2px no-repeat,repeating-linear-gradient(90deg,#a02020 0 2px,transparent 2px 4px,#30a020 4px 6px,transparent 6px 9px) 0 0/100% 2px no-repeat}
</style><div class="keys"></div><div class="q">32.01  400</div><div class="t"></div>`);

make('trading-desktop', `<style>
:host{display:grid;grid-template:2px 1fr 8px / 9px 1fr 9px;height:100vh;position:relative;overflow:hidden;background:#1d4f86}
.left,.right{grid-row:1/4;font:13px/18px ${UI};color:#555;overflow:hidden}
.left{grid-column:1;background:linear-gradient(#e6e6e6 0 35px,#fafafa 35px 78px,#9b9b9b 78px 128px,#6f8c8c 128px 152px,#777 152px 158px,#fff 158px 207px,#151515 207px 213px,#a00080 213px 214px,#151515 214px 240px,#1c2c4c 240px 248px,#f4f4f4 248px 271px,#d8d8d8 271px 281px,#0a0a0a 281px 462px,#a00080 462px 464px,#0a0a0a 464px 514px,#a00080 514px 515px,#0a0a0a 515px 568px,#ccc 568px 570px,#0a0a0a 570px 616px,#a00080 616px 617px,#0a0a0a 617px 628px,#1c2c4c 628px 635px,#f2f2f2 635px 871px,#777 871px 876px,#6f8c8c 876px 906px,#777 906px 935px,#6f8c8c 935px 952px,#eee 952px)}
.left span{display:block;height:18px}
.left .a{margin:9px 0 22px -6px}
.right{grid-column:3;border-left:2px solid #1d4f86;background:linear-gradient(#f4f4f4 0 72px,#222 72px 74px,#999 74px 87px,#222 87px 89px,#e6e6e6 89px 214px,#888 214px 216px,#f4f4f4 216px 231px,#222 231px 233px,#999 233px 246px,#35b09a 246px 261px,#222 261px 263px,#f6e3c8 263px 275px,#222 275px 277px,#f6e3c8 277px 291px,#222 291px 293px,#f6e3c8 293px 307px,#222 307px 309px,#f6e3c8 309px 319px,#e6e6e6 319px 338px,#f4f4f4 338px 355px,#222 355px 357px,#999 357px 371px,#e0508c 371px 386px,#222 386px 388px,#e6e6e6 388px)}
chart-window{grid-area:2/2}
lower-window{grid-area:3/2;margin-left:879px}
task-bar{position:absolute;left:0;bottom:0;width:888px;z-index:5}
.side{position:absolute;z-index:5;right:0;top:461px;bottom:0;width:11px;box-sizing:border-box;border-left:2px solid #a8aeb4;background:linear-gradient(#fff 0 34px,#e2e2e2 34px 58px,#fff 58px 60px,#888 60px 62px,#0ff 62px 80px,#888 80px 82px,#f0f0f0 82px);overflow:hidden}
.side i{display:block;width:14px;height:14px;margin:8px 0 0 5px;border-radius:50%;background:#24496b}
.side b{display:block;font:15px/20px "Noto Sans CJK SC",sans-serif;margin:14px 0 0 2px;width:20px}
</style>
<div class="left"><span class="a">络</span><span>e</span></div><div class="right"></div>
<chart-window></chart-window><lower-window></lower-window><task-bar></task-bar>
<div class="side"><i></i><b>代</b></div>`);
</script>
</body>
</html>
